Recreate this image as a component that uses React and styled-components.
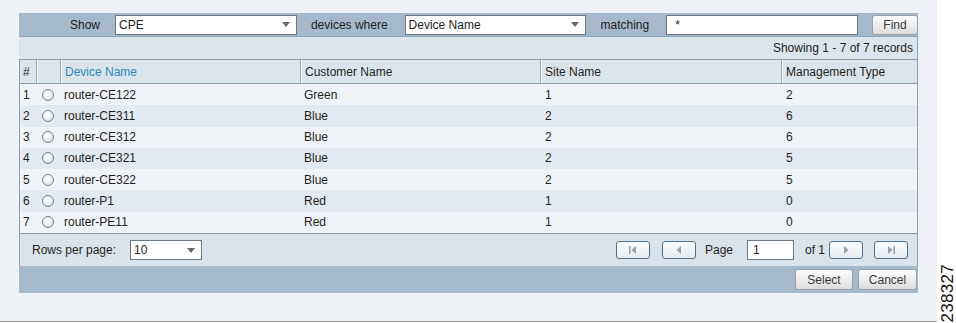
import React from 'react';
import styled, { createGlobalStyle } from 'styled-components';

const GlobalStyle = createGlobalStyle`
  html, body { margin: 0; padding: 0; background: #fff; }
  body {
    font-family: "Liberation Sans", Arial, Helvetica, sans-serif;
    font-size: 12px;
    color: #1e1e1e;
  }
  * { box-sizing: border-box; }
`;

const Page = styled.div`
  display: flex;
  width: 956px;
  height: 323px;
`;

const Main = styled.div`
  width: 937px;
  height: 322px;
  background: #eef2f6;
  border-bottom: 1px solid #9a9a9a;
  padding: 13px 0 0 19px;
`;

const Side = styled.div`
  flex: 1;
  display: flex;
  flex-direction: column;
  justify-content: flex-end;
  align-items: center;
  padding-left: 1px;
`;

const FigureId = styled.div`
  writing-mode: vertical-rl;
  transform: rotate(180deg);
  font-size: 17px;
  line-height: 1;
  color: #111;
  letter-spacing: 0.3px;
`;

const Panel = styled.div`
  width: 899px;
  display: flex;
  flex-direction: column;
`;

const Toolbar = styled.div`
  height: 24px;
  background: #a5b9cb;
  border-bottom: 1px solid #8ea3b6;
  display: flex;
  align-items: center;
  padding-left: 51px;
`;

const Label = styled.span`
  margin-right: ${p => p.$mr ?? 15}px;
  color: #1e1e1e;
  white-space: nowrap;
`;

const SelectBox = styled.div`
  width: ${p => p.$w}px;
  height: 20px;
  background: #fff;
  border: 1px solid #6a7a89;
  margin-right: ${p => p.$mr ?? 0}px;
  padding-left: 3px;
  display: flex;
  align-items: center;
  color: #1e1e1e;
`;

const Arrow = styled.span`
  margin-left: auto;
  margin-right: 6px;
  width: 0;
  height: 0;
  border-left: 4px solid transparent;
  border-right: 4px solid transparent;
  border-top: 5px solid #666;
`;

const TextInput = styled.div`
  width: ${p => p.$w}px;
  height: ${p => p.$h ?? 20}px;
  background: #fff;
  border: 1px solid #6a7a89;
  margin-right: ${p => p.$mr ?? 0}px;
  padding-left: ${p => p.$pl ?? 8}px;
  display: flex;
  align-items: center;
  color: #1e1e1e;
`;

const Button = styled.button`
  width: ${p => p.$w}px;
  height: ${p => p.$h ?? 20}px;
  font-family: inherit;
  font-size: 12px;
  color: #3a3a3a;
  border: 1px solid #97a2ac;
  border-radius: 3px;
  background: linear-gradient(#fdfdfd, #ececec 55%, #dcdcdc);
  padding: 0;
  display: flex;
  align-items: center;
  justify-content: center;
  box-shadow: inset 0 1px 0 #fff;
`;

const InfoBar = styled.div`
  height: 23px;
  background: #dde5ec;
  border-right: 1px solid #8d9cab;
  border-bottom: 1px solid #8d9cab;
  display: flex;
  align-items: center;
  justify-content: flex-end;
  padding-right: 4px;
  color: #1e1e1e;
`;

const COLS = '16px 24px 240px 240px 241px 136px';

const Table = styled.div`
  border-left: 1px solid #8d9cab;
  border-right: 1px solid #8d9cab;
  display: flex;
  flex-direction: column;
`;

const HeaderRow = styled.div`
  display: grid;
  grid-template-columns: ${COLS};
  height: 24px;
  background: #dce4eb;
  border-bottom: 1px solid #8d9cab;
`;

const HeaderCell = styled.div`
  display: flex;
  align-items: center;
  padding-left: ${p => p.$pl ?? 4}px;
  color: ${p => (p.$active ? '#2a8ac2' : '#1e1e1e')};
  border-left: ${p => (p.$first ? 'none' : '1px solid #9eabb7')};
  box-shadow: ${p => (p.$first ? 'none' : 'inset 1px 0 0 #f7f9fb')};
`;

const Body = styled.div`
  display: grid;
  grid-template-rows: repeat(7, 1fr);
  height: 149px;
`;

const Row = styled.div`
  display: grid;
  grid-template-columns: ${COLS};
  background: ${p => (p.$odd ? '#f0f4f8' : '#e2e9f0')};
`;

const Cell = styled.div`
  display: flex;
  align-items: center;
  padding-left: ${p => p.$pl ?? 4}px;
  color: #1e1e1e;
  white-space: nowrap;
`;

const Radio = styled.span`
  width: 12px;
  height: 12px;
  border-radius: 50%;
  border: 1px solid #76838f;
  background: radial-gradient(circle at 40% 35%, #ffffff 0%, #eef1f4 45%, #cfd6dd 100%);
`;

const Footer = styled.div`
  height: 33px;
  background: #dbe3ea;
  border-top: 1px solid #8d9cab;
  border-left: 1px solid #8d9cab;
  border-right: 1px solid #8d9cab;
  display: flex;
  align-items: center;
  padding: 0 9px 0 12px;
`;

const Pager = styled.div`
  margin-left: auto;
  display: flex;
  align-items: center;
`;

const PageButton = styled.button`
  width: 34px;
  height: 18px;
  padding: 0;
  border: 1px solid #50708f;
  border-radius: 3px;
  background: linear-gradient(#fafbfc, #e6ebf0);
  display: flex;
  align-items: center;
  justify-content: center;
  margin-right: ${p => p.$mr ?? 0}px;
`;

const BottomBar = styled.div`
  height: 27px;
  background: #a5b9cb;
  display: flex;
  align-items: center;
  justify-content: flex-end;
  gap: 5px;
  padding-right: 1px;
`;

const IconFirst = () => (
  <svg width="10" height="8" viewBox="0 0 10 8">
    <rect x="1" y="0" width="1.5" height="8" fill="#97a3ae" />
    <polygon points="8,0 8,8 3.5,4" fill="#97a3ae" />
  </svg>
);
const IconPrev = () => (
  <svg width="8" height="8" viewBox="0 0 8 8">
    <polygon points="6,0 6,8 1.5,4" fill="#97a3ae" />
  </svg>
);
const IconNext = () => (
  <svg width="8" height="8" viewBox="0 0 8 8">
    <polygon points="2,0 2,8 6.5,4" fill="#97a3ae" />
  </svg>
);
const IconLast = () => (
  <svg width="10" height="8" viewBox="0 0 10 8">
    <polygon points="2,0 2,8 6.5,4" fill="#97a3ae" />
    <rect x="7.5" y="0" width="1.5" height="8" fill="#97a3ae" />
  </svg>
);

const rows = [
  ['router-CE122', 'Green', '1', '2'],
  ['router-CE311', 'Blue', '2', '6'],
  ['router-CE312', 'Blue', '2', '6'],
  ['router-CE321', 'Blue', '2', '5'],
  ['router-CE322', 'Blue', '2', '5'],
  ['router-P1', 'Red', '1', '0'],
  ['router-PE11', 'Red', '1', '0'],
];

export default function App() {
  return (
    <>
      <GlobalStyle />
      <Page>
        <Main>
          <Panel>
            <Toolbar>
              <Label>Show</Label>
              <SelectBox $w={182} $mr={14}>
                CPE
                <Arrow />
              </SelectBox>
              <Label $mr={17}>devices where</Label>
              <SelectBox $w={182} $mr={14}>
                Device Name
                <Arrow />
              </SelectBox>
              <Label $mr={17}>matching</Label>
              <TextInput $w={192} $mr={14}>*</TextInput>
              <Button $w={46}>Find</Button>
            </Toolbar>
            <InfoBar>Showing 1 - 7 of 7 records</InfoBar>
            <Table>
              <HeaderRow>
                <HeaderCell $first $pl={3}>#</HeaderCell>
                <HeaderCell />
                <HeaderCell $active>Device Name</HeaderCell>
                <HeaderCell>Customer Name</HeaderCell>
                <HeaderCell>Site Name</HeaderCell>
                <HeaderCell>Management Type</HeaderCell>
              </HeaderRow>
              <Body>
                {rows.map((r, i) => (
                  <Row key={r[0]} $odd={i % 2 === 0}>
                    <Cell $pl={3}>{i + 1}</Cell>
                    <Cell $pl={6}>
                      <Radio />
                    </Cell>
                    <Cell>{r[0]}</Cell>
                    <Cell>{r[1]}</Cell>
                    <Cell $pl={5}>{r[2]}</Cell>
                    <Cell $pl={5}>{r[3]}</Cell>
                  </Row>
                ))}
              </Body>
            </Table>
            <Footer>
              <Label $mr={14}>Rows per page:</Label>
              <SelectBox $w={72}>
                10
                <Arrow />
              </SelectBox>
              <Pager>
                <PageButton $mr={12}>
                  <IconFirst />
                </PageButton>
                <PageButton $mr={9}>
                  <IconPrev />
                </PageButton>
                <Label $mr={14}>Page</Label>
                <TextInput $w={47} $pl={5} $mr={11}>1</TextInput>
                <Label $mr={4}>of 1</Label>
                <PageButton $mr={11}>
                  <IconNext />
                </PageButton>
                <PageButton>
                  <IconLast />
                </PageButton>
              </Pager>
            </Footer>
            <BottomBar>
              <Button $w={58} $h={21}>Select</Button>
              <Button $w={59} $h={21}>Cancel</Button>
            </BottomBar>
          </Panel>
        </Main>
        <Side>
          <FigureId>238327</FigureId>
        </Side>
      </Page>
    </>
  );
}
